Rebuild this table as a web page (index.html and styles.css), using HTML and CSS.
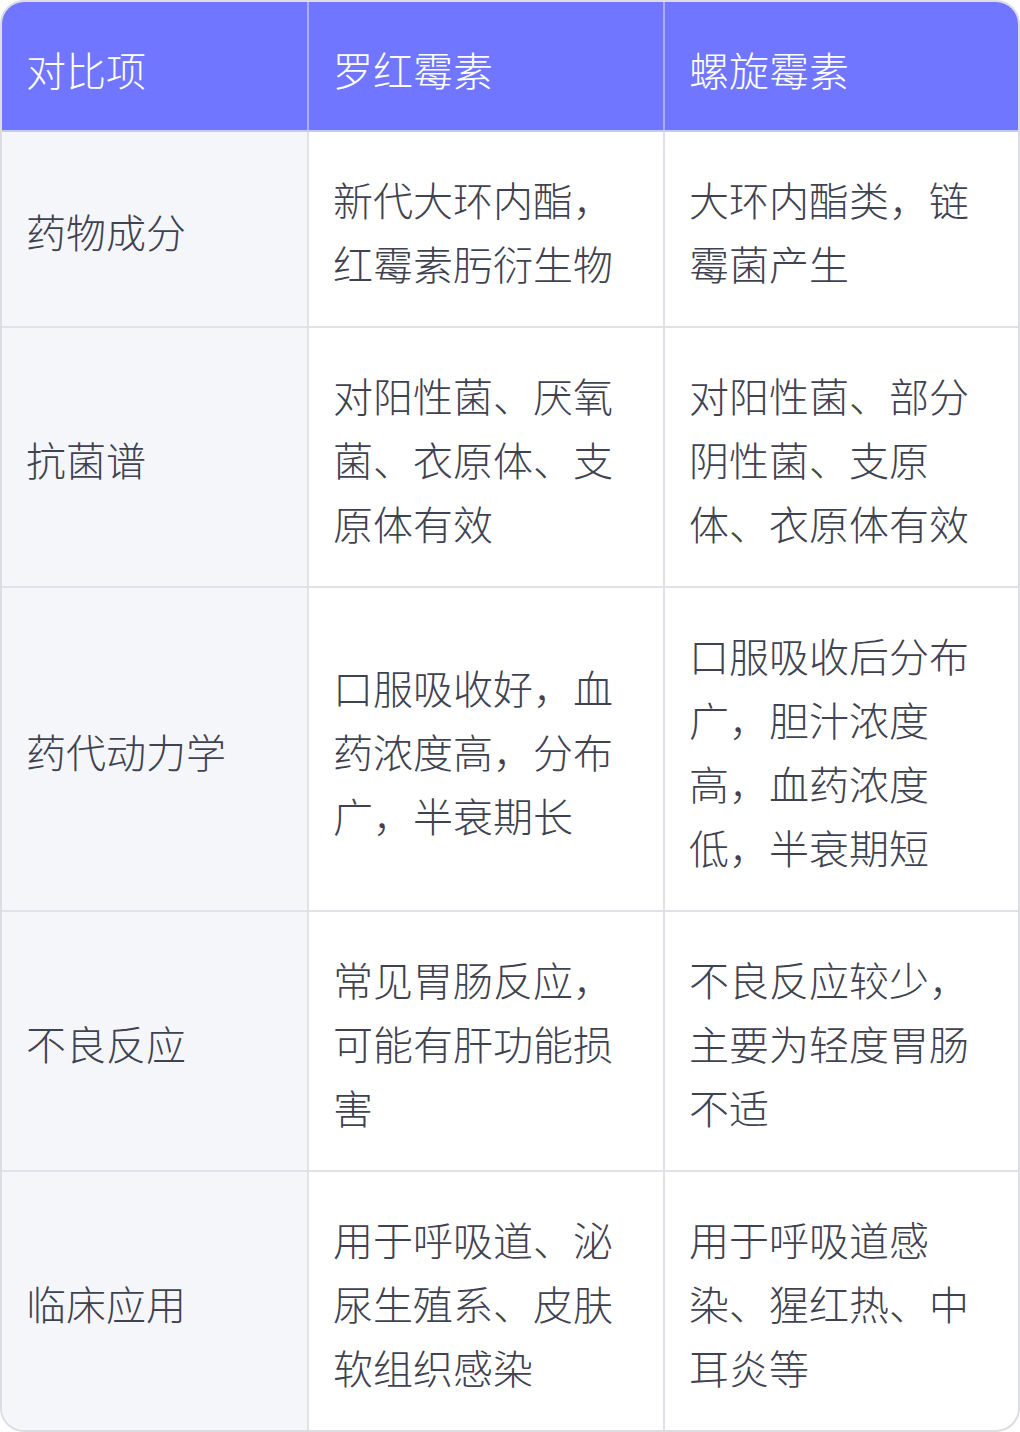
FILE: index.html
```html
<!DOCTYPE html>
<html lang="zh-CN">
<head>
<meta charset="utf-8">
<link rel="stylesheet" href="styles.css">
</head>
<body>
<div class="wrap">
<table class="cmp">
<colgroup><col class="c1"><col class="c2"><col class="c3"></colgroup>
<thead>
<tr><th>对比项</th><th>罗红霉素</th><th>螺旋霉素</th></tr>
</thead>
<tbody>
<tr><td>药物成分</td><td>新代大环内酯，红霉素肟衍生物</td><td>大环内酯类，链霉菌产生</td></tr>
<tr><td>抗菌谱</td><td>对阳性菌、厌氧菌、衣原体、支原体有效</td><td>对阳性菌、部分阴性菌、支原体、衣原体有效</td></tr>
<tr><td>药代动力学</td><td>口服吸收好，血药浓度高，分布广，半衰期长</td><td>口服吸收后分布广，胆汁浓度高，血药浓度低，半衰期短</td></tr>
<tr><td>不良反应</td><td>常见胃肠反应，可能有肝功能损害</td><td>不良反应较少，主要为轻度胃肠不适</td></tr>
<tr><td>临床应用</td><td>用于呼吸道、泌尿生殖系、皮肤软组织感染</td><td>用于呼吸道感染、猩红热、中耳炎等</td></tr>
</tbody>
</table>
</div>
</body>
</html>
```
FILE: styles.css
```css
html, body {
  margin: 0;
  padding: 0;
  background: #ffffff;
}
.wrap {
  width: 1020px;
  height: 1432px;
  box-sizing: border-box;
  border: 2px solid #dcdde2;
  border-radius: 24px;
  overflow: hidden;
  background: #ffffff;
}
.cmp {
  width: 100%;
  border-collapse: collapse;
  table-layout: fixed;
  font-family: "Noto Sans CJK SC", "Noto Sans", sans-serif;
  font-size: 40px;
  line-height: 64px;
  color: #3f4250;
}
.c1 { width: 306px; }
.c2 { width: 356px; }
.c3 { width: auto; }
.cmp th, .cmp td {
  padding: 35px 23px 31px 24px;
  text-align: left;
  vertical-align: middle;
  font-weight: 300;
  border-right: 2px solid #e1e2e7;
  border-bottom: 2px solid #e1e2e7;
}
.cmp th:last-child, .cmp td:last-child { border-right: none; }
.cmp tbody tr:last-child td { border-bottom: none; }
.cmp th {
  padding: 35px 23px 29px 24px;
  background: #7076ff;
  color: #ffffff;
  border-right-color: #a9adfb;
  border-bottom-color: #c6c8f5;
}
.cmp td:first-child {
  background: #f5f6fa;
}
```
